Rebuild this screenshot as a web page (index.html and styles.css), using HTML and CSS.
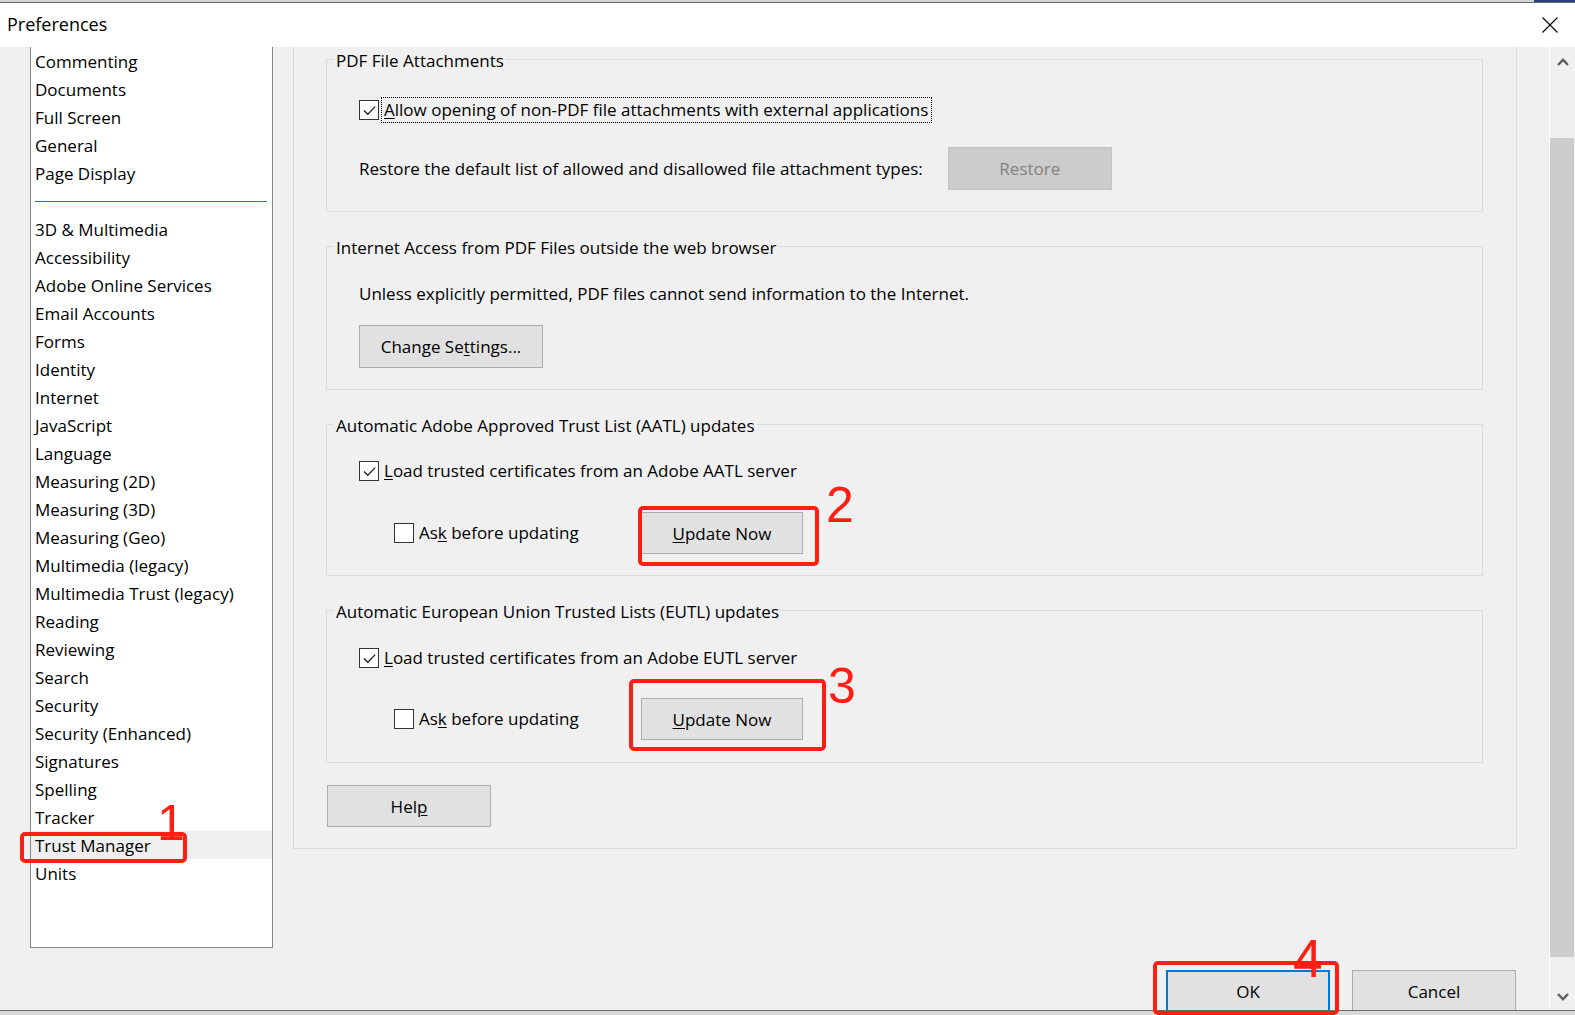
FILE: index.html
```html
<!DOCTYPE html>
<html>
<head>
    <title>Preferences</title>
    <link rel="stylesheet" href="styles.css">
</head>
<body>
    <div class="window">
        <div class="topstrip"><span class="accent"></span></div>
        <div class="titlebar">
            <span class="title">Preferences</span>
            <svg class="close" width="16" height="16" viewBox="0 0 16 16">
                <path d="M0.5 0.5 L15.5 15.5 M15.5 0.5 L0.5 15.5" stroke="#000" stroke-width="1.1" fill="none"/>
            </svg>
        </div>

        <div class="body">
            <div class="main">
                <ul class="categories">
                    <li>Commenting</li>
                    <li>Documents</li>
                    <li>Full Screen</li>
                    <li>General</li>
                    <li>Page Display</li>
                    <li class="sep"></li>
                    <li>3D &amp; Multimedia</li>
                    <li>Accessibility</li>
                    <li>Adobe Online Services</li>
                    <li>Email Accounts</li>
                    <li>Forms</li>
                    <li>Identity</li>
                    <li>Internet</li>
                    <li>JavaScript</li>
                    <li>Language</li>
                    <li>Measuring (2D)</li>
                    <li>Measuring (3D)</li>
                    <li>Measuring (Geo)</li>
                    <li>Multimedia (legacy)</li>
                    <li>Multimedia Trust (legacy)</li>
                    <li>Reading</li>
                    <li>Reviewing</li>
                    <li>Search</li>
                    <li>Security</li>
                    <li>Security (Enhanced)</li>
                    <li>Signatures</li>
                    <li>Spelling</li>
                    <li>Tracker</li>
                    <li class="selected">Trust Manager</li>
                    <li>Units</li>
                </ul>

                <div class="right">
                    <div class="panel">
                        <fieldset class="group g1">
                            <legend>PDF File Attachments</legend>
                            <div class="row check-row">
                                <span class="box checked"><svg width="17" height="17" viewBox="0 0 17 17"><path d="M3 8.5 L6.8 12.3 L14.2 4.6" stroke="#222" stroke-width="1.3" fill="none"/></svg></span>
                                <span class="label focused"><u>A</u>llow opening of non-PDF file attachments with external applications</span>
                            </div>
                            <div class="row restore-row">
                                <span class="text">Restore the default list of allowed and disallowed file attachment types:</span>
                                <button class="btn disabled restore">Restore</button>
                            </div>
                        </fieldset>

                        <fieldset class="group g2">
                            <legend>Internet Access from PDF Files outside the web browser</legend>
                            <div class="row text-row">
                                <span class="text">Unless explicitly permitted, PDF files cannot send information to the Internet.</span>
                            </div>
                            <div class="row button-row">
                                <button class="btn settings">Change Se<u>t</u>tings...</button>
                            </div>
                        </fieldset>

                        <fieldset class="group g3">
                            <legend>Automatic Adobe Approved Trust List (AATL) updates</legend>
                            <div class="row check-row">
                                <span class="box checked"><svg width="17" height="17" viewBox="0 0 17 17"><path d="M3 8.5 L6.8 12.3 L14.2 4.6" stroke="#222" stroke-width="1.3" fill="none"/></svg></span>
                                <span class="label"><u>L</u>oad trusted certificates from an Adobe AATL server</span>
                            </div>
                            <div class="row ask-row">
                                <div class="ask">
                                    <span class="box"></span>
                                    <span class="label">As<u>k</u> before updating</span>
                                </div>
                                <button class="btn update"><u>U</u>pdate Now</button>
                            </div>
                        </fieldset>

                        <fieldset class="group g4">
                            <legend>Automatic European Union Trusted Lists (EUTL) updates</legend>
                            <div class="row check-row">
                                <span class="box checked"><svg width="17" height="17" viewBox="0 0 17 17"><path d="M3 8.5 L6.8 12.3 L14.2 4.6" stroke="#222" stroke-width="1.3" fill="none"/></svg></span>
                                <span class="label"><u>L</u>oad trusted certificates from an Adobe EUTL server</span>
                            </div>
                            <div class="row ask-row">
                                <div class="ask">
                                    <span class="box"></span>
                                    <span class="label">As<u>k</u> before updating</span>
                                </div>
                                <button class="btn update"><u>U</u>pdate Now</button>
                            </div>
                        </fieldset>

                        <button class="btn help">Hel<u>p</u></button>
                    </div>

                    <div class="footer">
                        <button class="btn default">OK</button>
                        <button class="btn">Cancel</button>
                    </div>
                </div>
            </div>

            <div class="scrollbar">
                <div class="sb-btn">
                    <svg width="12" height="8" viewBox="0 0 12 8"><path d="M1 7 L6 1.8 L11 7" stroke="#606060" stroke-width="2.4" fill="none"/></svg>
                </div>
                <div class="thumb"></div>
                <div class="sb-btn sb-down">
                    <svg width="12" height="8" viewBox="0 0 12 8"><path d="M1 1 L6 6.2 L11 1" stroke="#606060" stroke-width="2.4" fill="none"/></svg>
                </div>
            </div>
        </div>

        <div class="taskline"></div>

        <!-- red callouts drawn over the dialog -->
        <div class="mark m1"></div>
        <div class="num n1">1</div>
        <div class="mark m2"></div>
        <div class="num n2">2</div>
        <div class="mark m3"></div>
        <div class="num n3">3</div>
        <div class="mark m4"></div>
        <div class="num n4">4</div>
    </div>
</body>
</html>
```

FILE: styles.css
```css
html, body {
    margin: 0;
    padding: 0;
}
body {
    font-family: "Open Sans", "Noto Sans", sans-serif;
    font-size: 17px;
    color: #000;
    background: #f0f0f0;
}
.window {
    position: relative;
    width: 1575px;
    height: 1015px;
    overflow: hidden;
    background: #f0f0f0;
}

/* title bar */
.topstrip {
    height: 2px;
    background: #d2d2d2;
    border-bottom: 1px solid #6b6b6b;
    display: flex;
    justify-content: flex-end;
}
.accent {
    width: 41px;
    background: #23427a;
}
.titlebar {
    height: 44px;
    background: #fff;
    display: flex;
    justify-content: space-between;
    align-items: flex-start;
}
.title {
    font-size: 18px;
    line-height: 24px;
    padding: 9px 0 0 7px;
}
.close {
    margin: 14px 17px 0 0;
}

/* body */
.body {
    height: 963px;
    display: flex;
    overflow: hidden;
}
.main {
    flex: 1;
    display: flex;
    align-items: flex-start;
}

/* category list */
.categories {
    list-style: none;
    margin: 0 0 0 30px;
    padding: 0;
    width: 243px;
    height: 901px;
    box-sizing: border-box;
    background: #fff;
    border: 1px solid #828790;
    border-top: none;
}
.categories li {
    height: 28px;
    line-height: 30px;
    padding-left: 4px;
    white-space: nowrap;
}
.categories li.sep {
    height: 14px;
    padding: 0;
    margin: 0 5px 13px 4px;
    border-bottom: 1px solid #2a6db3;
}
.categories li.selected {
    background: #efefef;
}

/* right side */
.right {
    margin-left: 20px;
    width: 1224px;
    display: flex;
    flex-direction: column;
}
.panel {
    height: 802px;
    box-sizing: border-box;
    border: 1px solid #dcdcdc;
    border-top: none;
    padding: 0 33px 0 32px;
}
.group {
    margin: 0 0 22px;
    padding: 0 0 21px;
    border: 1px solid #dcdcdc;
    min-width: 0;
}
.group legend {
    margin-left: 7px;
    padding: 4px 2px 0;
    line-height: 20px;
}
.row {
    display: flex;
    align-items: center;
    padding-left: 32px;
}
.check-row {
    height: 26px;
    margin-top: 22px;
}
.g1 .check-row {
    margin-top: 26px;
}
.g4 .check-row {
    margin-top: 23px;
}
.g4 {
    padding-bottom: 22px;
}
.restore-row {
    margin-top: 24px;
    height: 43px;
}
.text-row {
    height: 26px;
    margin-top: 22px;
}
.button-row {
    margin-top: 19px;
}
.ask-row {
    margin-top: 28px;
    height: 42px;
    padding-left: 67px;
}
.g4 .ask-row {
    margin-top: 27px;
}
.ask {
    width: 247px;
    display: flex;
    align-items: center;
}

/* checkbox */
.box {
    width: 20px;
    height: 20px;
    box-sizing: border-box;
    border: 1px solid #333;
    background: #fff;
    display: flex;
    align-items: center;
    justify-content: center;
    flex: none;
}
.label {
    margin-left: 5px;
    line-height: 24px;
    white-space: nowrap;
}
.label.focused {
    margin-left: 2px;
    padding: 0 3px 0 2px;
    border: 1px dotted #000;
}
.text {
    white-space: nowrap;
}
u {
    text-decoration-thickness: 1px;
    text-underline-offset: 2px;
}

/* buttons */
.btn {
    font-family: inherit;
    font-size: 17px;
    color: #000;
    background: #e1e1e1;
    border: 1px solid #adadad;
    border-radius: 0;
    width: 164px;
    height: 42px;
    padding: 0;
    margin: 0;
    flex: none;
}
.btn.disabled {
    background: #cccccc;
    border-color: #c4c4c4;
    color: #838383;
}
.restore {
    height: 43px;
    margin-left: 25px;
}
.settings {
    width: 184px;
    height: 43px;
}
.update {
    width: 162px;
}
.help {
    margin-left: 1px;
}
.footer {
    margin-top: 121px;
    display: flex;
    justify-content: flex-end;
    gap: 22px;
    padding-right: 1px;
}
.btn.default {
    border: 2px solid #0078d7;
}

/* scrollbar */
.scrollbar {
    width: 25px;
    border-left: 1px solid #fff;
    background: #f0f0f0;
    display: flex;
    flex-direction: column;
}
.sb-btn {
    height: 30px;
    display: flex;
    align-items: center;
    justify-content: center;
}
.sb-down {
    margin-top: auto;
    height: 26px;
}
.thumb {
    margin-top: 61px;
    width: 24px;
    height: 819px;
    background: #cdcdcd;
}

.taskline {
    height: 4px;
    border-top: 1px solid #6b6b6b;
    background: #d9d9d9;
}

/* red callouts */
.mark {
    position: absolute;
    box-sizing: border-box;
    border: 4px solid #fe1f14;
    border-radius: 5px;
}
.m1 { left: 20px; top: 832px; width: 167px; height: 31px; }
.m2 { left: 638px; top: 506px; width: 181px; height: 60px; }
.m3 { left: 629px; top: 679px; width: 197px; height: 72px; }
.m4 { left: 1153px; top: 961px; width: 186px; height: 54px; }
.num {
    position: absolute;
    font-family: "Liberation Sans", Arial, sans-serif;
    font-size: 50px;
    line-height: 50px;
    color: #fe1f14;
}
.n1 { left: 157px; top: 798px; }
.n2 { left: 826px; top: 480px; }
.n3 { left: 828px; top: 661px; }
.n4 { left: 1293px; top: 932px; font-size: 53px; line-height: 53px; }
```
